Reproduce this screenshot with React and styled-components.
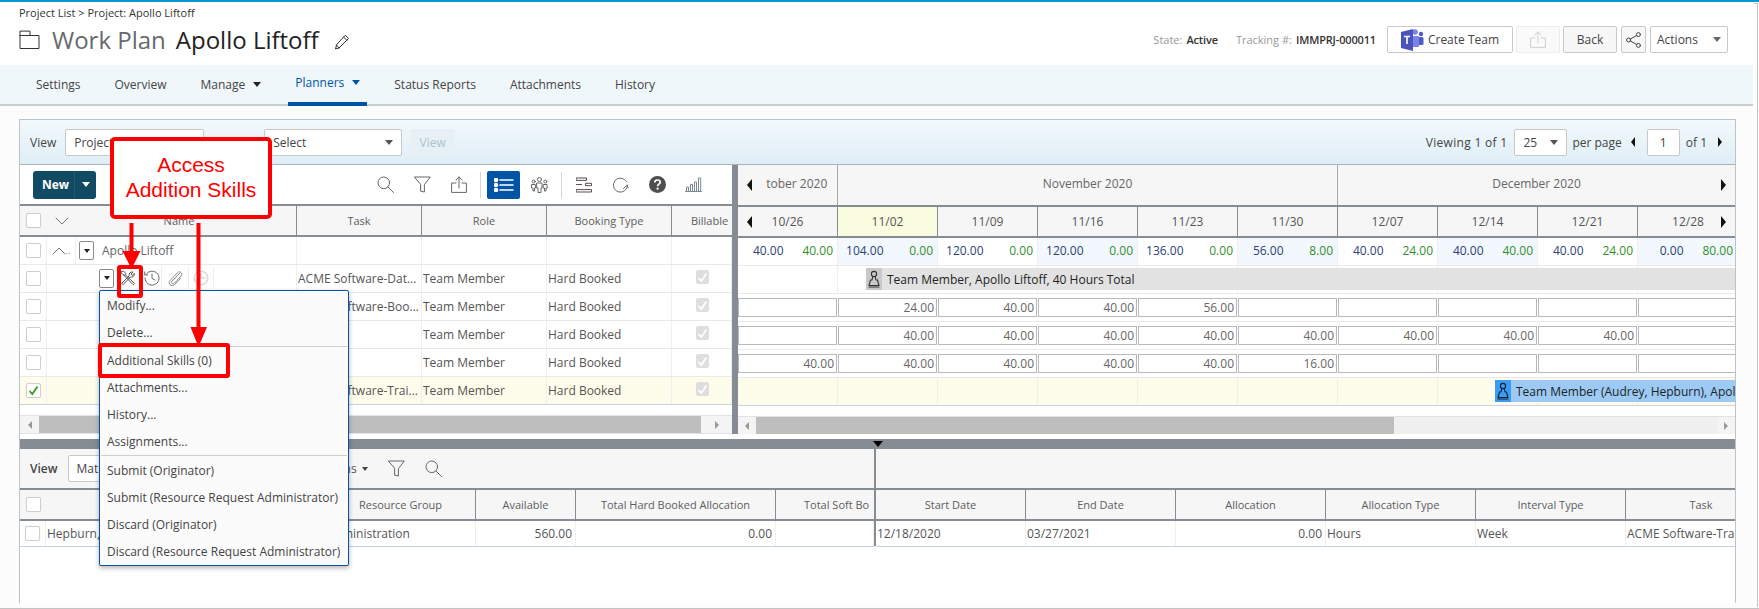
import React from 'react';
import styled, { createGlobalStyle } from 'styled-components';

const Global = createGlobalStyle`
  html, body { margin: 0; padding: 0; background: #fff; overflow: hidden; }
  body { font-family: "Open Sans", "Noto Sans", sans-serif; font-size: 12px; color: #555; }
  * { box-sizing: border-box; }
`;

const Page = styled.div`
  position: relative; width: 1759px; height: 609px; overflow: hidden;
  background: #fcfcfc; border-top: 2px solid #0a97d0;
  border-bottom: 1px solid #c4c4c4;
`;
const RightEdge = styled.div`
  position: absolute; top: 1px; right: 1px; width: 4px; height: 604px;
  background: #fff; border-right: 1px solid #c4c4c4; border-top: 1px solid #c4c4c4;
`;
const Header = styled.header`
  height: 63px; background: #fff; display: flex; justify-content: space-between; padding: 3px 31px 0 19px;
`;
const Breadcrumb = styled.div`font-size: 11px; line-height: 15px; color: #333;`;
const TitleRow = styled.div`display: flex; align-items: center; height: 34px; margin-top: 3px; font-size: 24px; line-height: 34px;`;
const TitleMuted = styled.span`color: #666a6e; margin-left: 12px;`;
const TitleMain = styled.span`color: #222; margin-left: 10px;`;
const EditIcon = styled.span`display: inline-flex; margin-left: 15px; margin-top: 3px;`;
const HeaderRight = styled.div`display: flex; align-items: center; height: 27px; margin-top: 21px;`;
const Meta = styled.span`font-size: 11px; color: #999; margin-left: ${p => p.$gap || 0}px;`;
const MetaValue = styled.span`color: #333; font-weight: 600; margin-left: 4px; letter-spacing: -.15px;`;
const HeadBtn = styled.div`
  height: 27px; width: ${p => p.$w}px; margin-left: ${p => p.$gap}px; display: flex; align-items: center; justify-content: center;
  border: 1px solid ${p => p.$off ? '#ececec' : '#c9c9c9'}; border-radius: 2px; background: ${p => p.$bg || '#fff'};
  color: #444; font-size: 12px; gap: 4px;
`;
const ActionsBtn = styled(HeadBtn)`justify-content: space-between; padding: 0 6px;`;

const Nav = styled.nav`
  height: 41px; width: 1753px; background: #f0f7fb; border-bottom: 2px solid #c8cdd0; display: flex; gap: 20px; padding-left: 29px;
`;
const Tab = styled.div`
  height: 41px; padding: 0 7px 2px; display: flex; align-items: center; gap: 8px; font-size: 12px;
  color: ${p => p.$on ? '#0054a6' : '#444'}; font-weight: ${p => p.$on ? 500 : 400};
  border-bottom: ${p => p.$on ? '4px solid #0054a6' : '0'};
`;
const Caret = styled.i`
  display: inline-block; width: 0; height: 0; border-left: ${p => p.$s || 4}px solid transparent; border-right: ${p => p.$s || 4}px solid transparent;
  border-top: ${p => (p.$s || 4) + 1}px solid ${p => p.$c || '#222'};
`;

const Main = styled.main`padding: 13px 0 0 19px; height: 503px;`;
const Panel = styled.section`
  width: 1717px; height: 484px; background: #fff; border: 1px solid #b9c5cd; border-bottom: 0; display: flex; flex-direction: column;
`;
const ViewBar = styled.div`
  height: 45px; flex: none; display: flex; align-items: center; padding: 0 13px 0 10px;
  background: linear-gradient(#f2f9fc, #dfeef6); border-bottom: 1px solid #aab4ba;
`;
const Label = styled.span`color: #444; font-size: 12px; font-weight: ${p => p.$b ? 600 : 400};`;
const Select = styled.div`
  height: 27px; width: ${p => p.$w}px; margin-left: ${p => p.$gap}px; display: flex; align-items: center; justify-content: space-between;
  padding: 0 8px; background: #fff; border: 1px solid #c8c8c8; border-radius: 2px; color: #444; flex: none;
`;
const GhostBtn = styled.div`
  height: 27px; width: 45px; margin-left: 8px; background: #e6f0f5; border-radius: 2px; color: #b0c2cc;
  display: flex; align-items: center; justify-content: center;
`;
const Pager = styled.div`margin-left: auto; display: flex; align-items: center; color: #444;`;
const Viewing = styled.span`letter-spacing: .3px;`;
const PerPage = styled.span`margin-left: 5px;`;
const PageInput = styled.div`
  width: 33px; height: 27px; margin: 0 6px 0 12px; border: 1px solid #c8c8c8; border-radius: 2px; background: #fff;
  display: flex; align-items: center; justify-content: center;
`;
const Tri = styled.i`
  display: inline-block; width: 0; height: 0; flex: none; margin: ${p => p.$m || '0'};
  border-top: ${p => p.$s || 5}px solid transparent; border-bottom: ${p => p.$s || 5}px solid transparent;
  ${p => p.$dir === 'r' ? `border-left: ${p.$w || 5}px solid ${p.$c || '#111'};` : `border-right: ${p.$w || 5}px solid ${p.$c || '#111'};`}
`;

const Upper = styled.div`display: flex; height: 269px; flex: none;`;
const LeftPane = styled.div`width: 712px; flex: none; overflow: hidden;`;
const Divider = styled.div`width: 6px; flex: none; background: #868c94;`;
const RightPane = styled.div`flex: 1; min-width: 0; overflow: hidden;`;

const ActionBar = styled.div`height: 39px; display: flex; align-items: center; padding: 0 20px 0 13px;`;
const NewBtn = styled.div`
  width: 63px; height: 28px; background: #114b63; border-radius: 3px; color: #fff; display: flex; align-items: center; font-weight: 700; font-size: 12px;
`;
const NewText = styled.span`width: 42px; padding-left: 9px; border-right: 1px solid #1d5a73; line-height: 28px;`;
const NewCaret = styled.span`flex: 1; display: flex; justify-content: center;`;
const Tools = styled.div`margin-left: auto; display: flex; align-items: center;`;
const Tool = styled.div`
  width: ${p => p.$w || 36.5}px; height: 28px; display: flex; align-items: center; justify-content: center; border-radius: 2px;
  background: ${p => p.$on ? '#0054a6' : 'transparent'}; flex: none;
`;
const ToolSep = styled.div`width: 1px; height: 26px; background: #d6d6d6; margin: 0 ${p => p.$r || 6}px 0 ${p => p.$l || 6}px;`;

const HeadRow = styled.div`
  display: grid; grid-template-columns: ${p => p.$cols}; height: 33px; background: #f6f6f6;
  border-top: 2px solid #868c94; border-bottom: 2px solid #868c94;
`;
const HeadCell = styled.div`
  display: flex; align-items: center; justify-content: ${p => p.$start ? 'flex-start' : 'center'}; font-weight: 500; color: #5d5d5d; white-space: nowrap; overflow: hidden;
  border-right: ${p => p.$last ? 0 : '1px solid #868c94'}; font-size: 11px; background: ${p => p.$bg || 'transparent'};
  padding-left: ${p => p.$pl || 0}px;
`;
const HeadCheck = styled.div`display: flex; align-items: center; justify-content: center;`;
const NameHead = styled.span`flex: 1; text-align: center; padding-right: 14px;`;
const Row = styled.div`
  display: grid; grid-template-columns: ${p => p.$cols}; height: ${p => p.$h || 28}px;
  background: ${p => p.$sel ? '#fefdeb' : '#fff'}; border-bottom: 1px solid ${p => p.$last ? '#c7d2dc' : '#e9e9e9'};
`;
const Cell = styled.div`
  display: flex; align-items: center; justify-content: ${p => p.$right ? 'flex-end' : p.$center ? 'center' : 'flex-start'};
  white-space: nowrap; overflow: hidden; color: #555; font-size: 12px; min-width: 0;
  border-right: 1px solid #efefef; padding: ${p => p.$right ? '0 3px 1px 0' : '0 0 1px 1px'};
`;
const CheckCell = styled(Cell)`justify-content: center; padding: 0;`;
const Check = styled.span`
  width: 15px; height: 15px; border: 1px solid #cfcfcf; border-radius: 2px; background: #fff; display: flex; align-items: center; justify-content: center;
  box-shadow: 0 0 1px #ddd;
`;
const Locked = styled.span`
  width: 13px; height: 14px; background: #dedede; border-radius: 2px; display: flex; align-items: center; justify-content: center; margin-top: -2px;
`;
const ChevBox = styled.span`width: 29px; height: 100%; display: flex; align-items: center; justify-content: center; border-right: ${p => p.$plain ? 0 : '1px solid #efefef'}; flex: none; color: #888; font-size: 9px;`;
const DropBox = styled.span`
  width: 15px; height: 19px; border: 1px solid #8a8a8a; border-radius: 2px; display: flex; align-items: center; justify-content: center; flex: none; margin-left: ${p => p.$ml || 0}px; background: #fff;
`;
const RowTitle = styled.span`margin-left: 8px; color: #666; font-size: 12px;`;
const RowSlot = styled.span`
  width: ${p => p.$w}px; height: 22px; display: flex; align-items: center; justify-content: center; flex: none; border-right: 1px solid #eee;
`;
const NameTools = styled(Cell)`padding-left: 52px;`;
const RowOne = styled(Cell)`padding: 0;`;

const HScroll = styled.div`height: 19px; margin-top: 10px; display: flex; background: #f0f0f0; border-top: 1px solid #dfe3e6; border-bottom: 1px solid #dfe3e6;`;
const ScrollEnd = styled.div`width: ${p => p.$w || 18}px; flex: none; display: flex; align-items: center; justify-content: center; background: #f4f4f4;`;
const Thumb = styled.div`width: ${p => p.$w}px; background: #bebebe; flex: none;`;
const Track = styled.div`flex: 1;`;

const MonthRow = styled.div`display: grid; grid-template-columns: 100px 500px 1fr; height: 40px; background: #f6f6f6;`;
const Month = styled.div`
  display: flex; align-items: center; justify-content: center; position: relative; font-weight: 500; color: #666; gap: 10px; padding-bottom: 3px;
  border-right: ${p => p.$last ? 0 : '1px solid #a8a8a8'}; padding-left: ${p => p.$pl || 0}px;
`;
const WeekRow = styled(HeadRow)`grid-template-columns: repeat(10, 100px);`;
const Week = styled(HeadCell)`position: relative; font-size: 12px; font-weight: 400; color: #555;`;
const EdgeArrow = styled.span`position: absolute; top: 50%; transform: translateY(-50%); ${p => p.$side}: ${p => p.$off || 9}px; display: flex;`;
const TimeRow = styled.div`
  height: 28px; display: grid; grid-template-columns: repeat(10, 100px); border-bottom: 1px solid #e9e9e9; width: 1000px;
  background: #fff;
`;
const TimeCell = styled.div`
  display: grid; grid-template-columns: 1fr 1fr; background: ${p => p.$tint ? '#f2f8fd' : '#fff'}; border-right: 1px solid #eef1f3;
`;
const Val = styled.span`
  display: flex; align-items: center; justify-content: flex-end; padding: 0 4px 2px 0; font-size: 12px; color: ${p => p.$green ? '#2f8f2a' : '#2b3f7a'};
`;
const GanttRow = styled.div`
  height: 28px; border-bottom: 1px solid ${p => p.$last ? '#c7d2dc' : '#e9e9e9'}; padding: 2px 0 3px ${p => p.$left}px; display: flex;
  background: ${p => p.$sel ? '#fefdeb' : '#fff'} repeating-linear-gradient(90deg, transparent 0 99px, ${p => p.$sel ? '#f0f0e4' : '#f0f0f0'} 99px 100px);
`;
const GanttBar = styled.div`
  flex: 1; display: flex; align-items: center; overflow: hidden; white-space: nowrap; background: ${p => p.$c}; color: #222; font-weight: 500; font-size: 12px;
`;
const GanttIcon = styled.span`width: 16px; height: 100%; flex: none; display: flex; align-items: center; justify-content: center; background: ${p => p.$c}; margin-right: 5px;`;
const InputRow = styled.div`
  height: 28px; border-bottom: 1px solid #e9e9e9; display: grid; grid-template-columns: repeat(10, 100px); width: 1000px; padding-top: 4px; background: #fff;
`;
const InputBox = styled.div`
  height: 19px; border: 1px solid #b6babd; margin-right: 1px; background: #fff; display: flex; align-items: center; justify-content: flex-end; padding-right: 2px; color: #666; font-size: 12px;
`;

const Splitter = styled.div`height: 10px; margin-top: 5px; background: #868c94; flex: none; position: relative;`;
const SplitMark = styled.i`
  position: absolute; left: 853px; top: 2px; width: 0; height: 0; border-left: 5px solid transparent; border-right: 5px solid transparent; border-top: 6px solid #000;
`;
const Lower = styled.div`display: flex; flex: 1; min-height: 0;`;
const LowerSide = styled.div`width: ${p => p.$w ? p.$w + 'px' : 'auto'}; flex: ${p => p.$w ? 'none' : 1}; min-width: 0; overflow: hidden;`;
const LowerSep = styled.div`width: 2px; height: 97px; flex: none; background: #868c94;`;
const LowerBar = styled.div`height: 39px; background: #f6f6f6; display: flex; align-items: center; padding-left: 10px;`;
const LowerTools = styled.div`display: flex; align-items: center; margin-left: 96px; gap: 20px;`;
const ActionWord = styled.span`display: flex; align-items: center; gap: 5px; color: #555;`;

const Menu = styled.div`
  position: absolute; left: 99px; top: 288px; width: 250px; height: 276px; background: #fbfbfb; border: 1px solid #0054a6; border-radius: 2px;
  box-shadow: 0 2px 5px rgba(0,0,0,.3); padding-top: 1px;
`;
const MenuItem = styled.div`height: 27px; line-height: 27px; padding-left: 7px; color: #444; font-size: 12px; white-space: nowrap;`;
const MenuSep = styled.div`height: 1px; margin: 0 1px ${p => p.$b || 0}px; background: #cfcfcf;`;
const Callout = styled.div`
  position: absolute; left: 110px; top: 135px; width: 162px; height: 82px; border: 4px solid #f00; border-radius: 5px; background: #fff;
  color: #f00; font-family: "Liberation Sans", Arial, sans-serif; font-size: 21px; line-height: 25px; text-align: center; padding-top: 11px;
`;
const RedBox = styled.div`
  position: absolute; left: ${p => p.$x}px; top: ${p => p.$y}px; width: ${p => p.$w}px; height: ${p => p.$h}px; border: ${p => p.$b || 4}px solid #f00; border-radius: 3px;
`;
const Arrows = styled.svg`position: absolute; left: 0; top: 0; pointer-events: none;`;

const Ic = ({ w = 16, h = 16, children, s = '#666', sw = 1 }) => (
  <svg width={w} height={h} viewBox={`0 0 ${w} ${h}`} fill="none" stroke={s} strokeWidth={sw} strokeLinecap="round" strokeLinejoin="round">{children}</svg>
);
const FolderIcon = () => <Ic w={21} h={20} s="#333"><path d="M1 1.5V18.5H20V5.5H11V1.5ZM1 5.5H11" /></Ic>;
const Pencil = () => <Ic w={16} h={16} s="#333"><path d="M11.5 1.5L14.5 4.5L5 14L1.5 15L2.5 11ZM9.8 3.2L12.8 6.2M2.5 11L5 14" /></Ic>;
const Search = () => <Ic w={17} h={17}><circle cx="6.8" cy="6.8" r="5.8" /><path d="M11 11L16.5 16.5" /></Ic>;
const Filter = () => <Ic w={17} h={17}><path d="M.7 1H16.3L10.4 8.6V16L6.6 15.2V8.6Z" /></Ic>;
const Upload = ({ s = '#666' }) => <Ic w={16} h={17} s={s}><path d="M5 7H.6V16.4H15.4V7H11M8 12V1M5 4L8 1L11 4" /></Ic>;
const ListIcon = () => (
  <Ic w={20} h={14} s="#fff" sw={1.6}>
    <circle cx="2" cy="2" r="1.5" fill="#fff" /><circle cx="2" cy="7" r="1.5" fill="#fff" /><circle cx="2" cy="12" r="1.5" fill="#fff" />
    <path d="M6 2H19M6 7H19M6 12H19" />
  </Ic>
);
const People = () => (
  <Ic w={17} h={16}>
    <circle cx="8.5" cy="2.5" r="2" /><path d="M6 6H11V11H10V15.5H7V11H6Z" />
    <circle cx="2.7" cy="4.5" r="1.5" /><path d="M1 7.5H4.3L4.5 11H3.5V14H2V11H.8Z" />
    <circle cx="14.3" cy="4.5" r="1.5" /><path d="M12.7 7.5H16L16.2 11H15V14H13.5V11H12.5Z" />
  </Ic>
);
const Gantt = () => <Ic w={16} h={16} s="#5a4a50"><path d="M.5 1H10.5V3.4H.5ZM.5 7.5H5.5M10 6.3H15.5V8.7H10ZM.5 12.6H15.5V15H.5Z" /></Ic>;
const Refresh = () => <Ic w={17} h={17}><path d="M14.5 5.5A7 7 0 1 0 15.5 9M11.5 12.5L14.5 9.5L16.5 12" /></Ic>;
const Help = () => (
  <svg width="17" height="17" viewBox="0 0 17 17"><circle cx="8.5" cy="8.5" r="8.5" fill="#4f4f4f" /><path d="M5.8 6.4C5.8 4.8 7 4 8.5 4C10.1 4 11.2 4.9 11.2 6.2C11.2 8.2 8.6 8.2 8.6 10.2" fill="none" stroke="#fff" strokeWidth="1.7" /><circle cx="8.6" cy="12.7" r="1.1" fill="#fff" /></svg>
);
const Bars = () => <Ic w={17} h={15} s="#7a8a94"><path d="M.5 14.5H16.5M1.5 14V10H3.5V14M5.5 14V7.5H7.5V14M9.5 14V5H11.5V14M13.5 14V1H15.7V14" /></Ic>;
const ChevDown = () => <Ic w={14} h={8} s="#777"><path d="M1 1L7 7L13 1" /></Ic>;
const ChevUp = () => <Ic w={14} h={8} s="#777"><path d="M1 7L7 1L13 7" /></Ic>;
const Tools2 = () => (
  <Ic w={16} h={16} s="#555">
    <path d="M1.2 1.7L3.4 1L6 3.7L4.3 5.4L1.6 3.4ZM5 4.6L14.5 13.4L13.2 14.7L4 5.4" />
    <path d="M2 13L9.2 5.8C8.6 3.6 10.4 1.4 13 2L11 4L12.2 5.4L14.3 3.4C14.8 6 12.6 7.8 10.3 7L3.3 14.4Z" />
  </Ic>
);
const HistoryIc = () => <Ic w={16} h={16}><path d="M2.2 4.2A7 7 0 1 1 1 8M.7 2V5H3.7M8 4V8.4L11 10" /></Ic>;
const Clip = () => <Ic w={16} h={17} s="#888"><path d="M12.5 3.5L5 11.2C3.6 12.8 5.8 14.8 7.2 13.3L14 6C16.3 3.6 13 .3 10.6 2.7L3 10.5C.4 13.5 4.5 17.5 7.6 14.6L13.5 8.5" /></Ic>;
const ClockOff = () => <Ic w={16} h={16} s="#d9d9d9" sw={1.6}><circle cx="8" cy="8" r="6.8" /><path d="M8 4V8H12M1.5 10H5V14" /></Ic>;
const Tick = ({ c = '#fff', w = 11, sw = 1.8 }) => <svg width={w} height={w} viewBox="0 0 11 11" fill="none" stroke={c} strokeWidth={sw}><path d="M1.5 6L4.3 9L9.5 1.5" /></svg>;
const Person = ({ s }) => <Ic w={12} h={18} s={s} sw={1.1}><circle cx="6" cy="4" r="2.6" /><path d="M4.8 6.5L4 10H2.5L1 15.5H11L9.5 10H8L7.2 6.5M1 17H11" /></Ic>;
const Share = () => <Ic w={15} h={16} s="#444"><circle cx="2.6" cy="8" r="2" /><circle cx="12.4" cy="2.6" r="2" /><circle cx="12.4" cy="13.4" r="2" /><path d="M4.4 7L10.6 3.6M4.4 9L10.6 12.4" /></Ic>;
const TeamsLogo = () => (
  <svg width="23" height="22" viewBox="0 0 23 22">
    <circle cx="14" cy="3" r="2.8" fill="#7b83eb" /><circle cx="20" cy="5" r="2.2" fill="#5059c9" />
    <rect x="17" y="8" width="5.5" height="8" rx="1.5" fill="#5059c9" /><rect x="11" y="7" width="7" height="11" rx="1" fill="#7b83eb" />
    <path d="M0 3L12 0V22L0 19Z" fill="#4b53bc" /><path d="M3 7.5H9M6 7.5V15" stroke="#fff" strokeWidth="1.6" fill="none" />
  </svg>
);
const SmallCaret = () => <Caret $s={3} $c="#444" />;

const UP_COLS = '27px 250px 125px 125px 125px 60px';
const LOW_COLS = '26px 280px 150px 100px 200px 98px';
const RIGHT_COLS = '150px 150px 150px 150px 150px 150px 1fr';
const WEEKS = ['10/26', '11/02', '11/09', '11/16', '11/23', '11/30', '12/07', '12/14', '12/21', '12/28'];
const TOTALS = [['40.00', '40.00'], ['104.00', '0.00'], ['120.00', '0.00'], ['120.00', '0.00'], ['136.00', '0.00'], ['56.00', '8.00'], ['40.00', '24.00'], ['40.00', '40.00'], ['40.00', '24.00'], ['0.00', '80.00']];
const INPUTS = [
  ['', '24.00', '40.00', '40.00', '56.00', '', '', '', '', ''],
  ['', '40.00', '40.00', '40.00', '40.00', '40.00', '40.00', '40.00', '40.00', ''],
  ['40.00', '40.00', '40.00', '40.00', '40.00', '16.00', '', '', '', ''],
];
const TASKS = [['ACME Software-Boo...', false], ['', false], ['', false], ['ACME Software-Trai...', true]];
const MENU = [['Modify...', 'Delete...'], ['Additional Skills (0)', 'Attachments...', 'History...', 'Assignments...'], ['Submit (Originator)', 'Submit (Resource Request Administrator)', 'Discard (Originator)', 'Discard (Resource Request Administrator)']];

const RowCommon = ({ task, sel, last }) => (
  <Row $cols={UP_COLS} $sel={sel} $last={last}>
    <CheckCell><Check>{sel && <Tick c="#3a9a1f" />}</Check></CheckCell>
    <Cell />
    <Cell>{task}</Cell>
    <Cell>Team Member</Cell>
    <Cell>Hard Booked</Cell>
    <Cell $center><Locked><Tick /></Locked></Cell>
  </Row>
);

export default function App() {
  return (
    <Page>
      <Global />
      <Header>
        <div>
          <Breadcrumb>Project List &gt; Project: Apollo Liftoff</Breadcrumb>
          <TitleRow>
            <FolderIcon />
            <TitleMuted>Work Plan</TitleMuted>
            <TitleMain>Apollo Liftoff</TitleMain>
            <EditIcon><Pencil /></EditIcon>
          </TitleRow>
        </div>
        <HeaderRight>
          <Meta>State:<MetaValue>Active</MetaValue></Meta>
          <Meta $gap={18}>Tracking #:<MetaValue>IMMPRJ-000011</MetaValue></Meta>
          <HeadBtn $w={126} $gap={11}><TeamsLogo />Create Team</HeadBtn>
          <HeadBtn $w={44} $gap={3} $off $bg="#fafafa"><Upload s="#cfcfcf" /></HeadBtn>
          <HeadBtn $w={54} $gap={3} $bg="#f7f7f7">Back</HeadBtn>
          <HeadBtn $w={25} $gap={4} $bg="#f7f7f7"><Share /></HeadBtn>
          <ActionsBtn $w={78} $gap={4}>Actions<Caret $s={4} $c="#666" /></ActionsBtn>
        </HeaderRight>
      </Header>
      <Nav>
        <Tab>Settings</Tab>
        <Tab>Overview</Tab>
        <Tab>Manage<Caret /></Tab>
        <Tab $on>Planners<Caret $c="#0054a6" /></Tab>
        <Tab>Status Reports</Tab>
        <Tab>Attachments</Tab>
        <Tab>History</Tab>
      </Nav>
      <Main>
        <Panel>
          <ViewBar>
            <Label>View</Label>
            <Select $w={139} $gap={9}>Project View<Caret $c="#555" /></Select>
            <Select $w={138} $gap={60}>Select<Caret $c="#555" /></Select>
            <GhostBtn>View</GhostBtn>
            <Pager>
              <Viewing>Viewing 1 of 1</Viewing>
              <Select $w={53} $gap={7}>25<Caret $c="#555" /></Select>
              <PerPage>per page</PerPage>
              <Tri $m="0 0 0 9px" $w={4} />
              <PageInput>1</PageInput>
              <span>of 1</span>
              <Tri $dir="r" $m="0 0 0 11px" $w={4} />
            </Pager>
          </ViewBar>
          <Upper>
            <LeftPane>
              <ActionBar>
                <NewBtn><NewText>New</NewText><NewCaret><Caret $c="#fff" /></NewCaret></NewBtn>
                <Tools>
                  <Tool><Search /></Tool>
                  <Tool><Filter /></Tool>
                  <Tool><Upload /></Tool>
                  <ToolSep $l={3} $r={6} />
                  <Tool $on $w={33}><ListIcon /></Tool>
                  <Tool $w={38}><People /></Tool>
                  <ToolSep $l={3} $r={4} />
                  <Tool><Gantt /></Tool>
                  <Tool><Refresh /></Tool>
                  <Tool><Help /></Tool>
                  <Tool><Bars /></Tool>
                </Tools>
              </ActionBar>
              <HeadRow $cols={UP_COLS}>
                <HeadCheck><Check /></HeadCheck>
                <HeadCell><ChevBox $plain><ChevDown /></ChevBox><NameHead>Name</NameHead></HeadCell>
                <HeadCell>Task</HeadCell>
                <HeadCell>Role</HeadCell>
                <HeadCell>Booking Type</HeadCell>
                <HeadCell $last $pl={15}>Billable</HeadCell>
              </HeadRow>
              <Row $cols={UP_COLS}>
                <CheckCell><Check /></CheckCell>
                <RowOne><ChevBox><ChevUp />..</ChevBox><DropBox $ml={3}><Caret $s={3} /></DropBox><RowTitle>Apollo Liftoff</RowTitle></RowOne>
                <Cell /><Cell /><Cell /><Cell />
              </Row>
              <Row $cols={UP_COLS}>
                <CheckCell><Check /></CheckCell>
                <NameTools>
                  <DropBox><Caret $s={3} /></DropBox>
                  <RowSlot $w={28}><Tools2 /></RowSlot>
                  <RowSlot $w={20}><HistoryIc /></RowSlot>
                  <RowSlot $w={27}><Clip /></RowSlot>
                  <RowSlot $w={25}><ClockOff /></RowSlot>
                </NameTools>
                <Cell>ACME Software-Dat...</Cell>
                <Cell>Team Member</Cell>
                <Cell>Hard Booked</Cell>
                <Cell $center><Locked><Tick /></Locked></Cell>
              </Row>
              {TASKS.map(([t, s], i) => <RowCommon key={i} task={t} sel={s} last={s} />)}
              <HScroll>
                <ScrollEnd $w={19}><Tri $s={4} $w={4} $c="#999" /></ScrollEnd>
                <Thumb $w={662} />
                <Track />
                <ScrollEnd $w={31}><Tri $dir="r" $s={4} $w={4} $c="#999" /></ScrollEnd>
              </HScroll>
            </LeftPane>
            <Divider />
            <RightPane>
              <MonthRow>
                <Month $pl={6}><EdgeArrow $side="left"><Tri $s={6} $w={5} /></EdgeArrow>&nbsp;&nbsp;&nbsp;&nbsp;tober 2020</Month>
                <Month>November 2020</Month>
                <Month $last>December 2020<EdgeArrow $side="right"><Tri $dir="r" $s={6} $w={5} /></EdgeArrow></Month>
              </MonthRow>
              <WeekRow>
                {WEEKS.map((w, i) => (
                  <Week key={w} $bg={i === 1 ? '#fafce0' : ''} $last={i === 9}>
                    {i === 0 && <EdgeArrow $side="left"><Tri $s={6} $w={5} /></EdgeArrow>}
                    {w}
                    {i === 9 && <EdgeArrow $side="right" $off={12}><Tri $dir="r" $s={6} $w={5} /></EdgeArrow>}
                  </Week>
                ))}
              </WeekRow>
              <TimeRow>
                {TOTALS.map(([a, b], i) => (
                  <TimeCell key={i} $tint={i % 2 === 1}><Val>{a}</Val><Val $green>{b}</Val></TimeCell>
                ))}
              </TimeRow>
              <GanttRow $left={128}>
                <GanttBar $c="#e2e2e2"><GanttIcon $c="#c9c9c9"><Person s="#333" /></GanttIcon>Team Member, Apollo Liftoff, 40 Hours Total</GanttBar>
              </GanttRow>
              {INPUTS.map((r, i) => (
                <InputRow key={i}>{r.map((v, j) => <InputBox key={j}>{v}</InputBox>)}</InputRow>
              ))}
              <GanttRow $left={757} $sel $last>
                <GanttBar $c="#9ccaf5"><GanttIcon $c="#3b9cf6"><Person s="#123" /></GanttIcon>Team Member (Audrey, Hepburn), Apol</GanttBar>
              </GanttRow>
              <HScroll>
                <ScrollEnd $w={18}><Tri $s={4} $w={4} $c="#999" /></ScrollEnd>
                <Thumb $w={638} />
                <Track />
                <ScrollEnd $w={18}><Tri $dir="r" $s={4} $w={4} $c="#999" /></ScrollEnd>
              </HScroll>
            </RightPane>
          </Upper>
          <Splitter><SplitMark /></Splitter>
          <Lower>
            <LowerSide $w={854}>
              <LowerBar>
                <Label $b>View</Label>
                <Select $w={180} $gap={10}>Mat</Select>
                <LowerTools>
                  <ActionWord>ns<SmallCaret /></ActionWord>
                  <Filter />
                  <Search />
                </LowerTools>
              </LowerBar>
              <HeadRow $cols={LOW_COLS}>
                <HeadCheck><Check /></HeadCheck>
                <HeadCell />
                <HeadCell>Resource Group</HeadCell>
                <HeadCell>Available</HeadCell>
                <HeadCell>Total Hard Booked Allocation</HeadCell>
                <HeadCell $last $start $pl={28}>Total Soft Bo</HeadCell>
              </HeadRow>
              <Row $cols={LOW_COLS} $h={26} $last>
                <CheckCell><Check /></CheckCell>
                <Cell>Hepburn,</Cell>
                <Cell>Administration</Cell>
                <Cell $right>560.00</Cell>
                <Cell $right>0.00</Cell>
                <Cell />
              </Row>
            </LowerSide>
            <LowerSep />
            <LowerSide>
              <LowerBar />
              <HeadRow $cols={RIGHT_COLS}>
                <HeadCell>Start Date</HeadCell>
                <HeadCell>End Date</HeadCell>
                <HeadCell>Allocation</HeadCell>
                <HeadCell>Allocation Type</HeadCell>
                <HeadCell>Interval Type</HeadCell>
                <HeadCell $last>Task</HeadCell>
              </HeadRow>
              <Row $cols={RIGHT_COLS} $h={26} $last>
                <Cell>12/18/2020</Cell>
                <Cell>03/27/2021</Cell>
                <Cell $right>0.00</Cell>
                <Cell>Hours</Cell>
                <Cell>Week</Cell>
                <Cell>ACME Software-Tra</Cell>
              </Row>
            </LowerSide>
          </Lower>
        </Panel>
      </Main>
      <RightEdge />
      <Menu>
        {MENU.map((group, i) => (
          <React.Fragment key={i}>
            {i > 0 && <MenuSep $b={i === 2 ? 1 : 0} />}
            {group.map(t => <MenuItem key={t}>{t}</MenuItem>)}
          </React.Fragment>
        ))}
      </Menu>
      <Callout>Access<br />Addition Skills</Callout>
      <RedBox $x={117} $y={263} $w={26} $h={33} />
      <RedBox $x={98} $y={341} $w={132} $h={35} />
      <Arrows width="400" height="360" viewBox="0 -2 400 360">
        <g fill="#f00" stroke="none">
          <rect x="129.5" y="219" width="4" height="30" />
          <path d="M122.5 247H140.5L131.5 265Z" />
          <rect x="196.5" y="219" width="4" height="105" />
          <path d="M190.5 323H207L198.5 343Z" />
        </g>
      </Arrows>
    </Page>
  );
}
